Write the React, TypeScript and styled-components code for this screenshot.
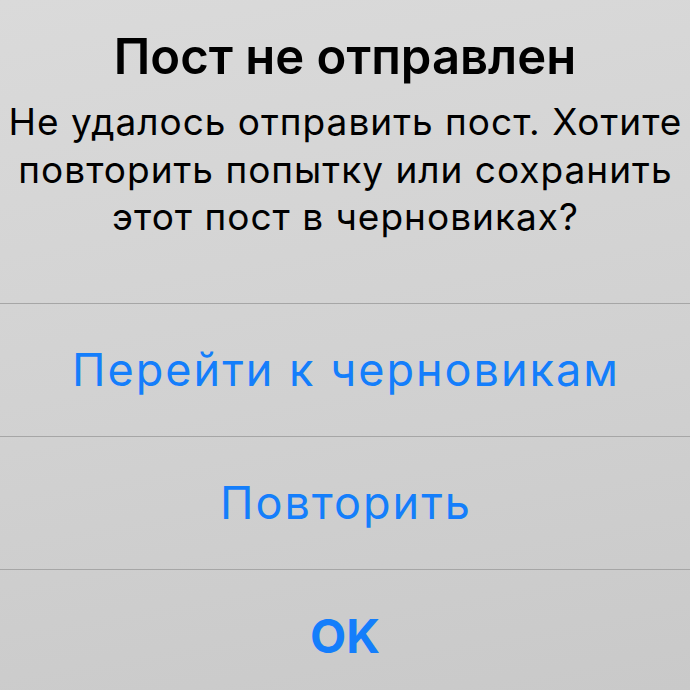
import React from "react";
import styled, { createGlobalStyle } from "styled-components";

const GlobalStyle = createGlobalStyle`
  html, body {
    margin: 0;
    padding: 0;
  }
  body {
    font-family: Inter, Roboto, "Liberation Sans", sans-serif;
  }
`;

const Sheet = styled.div`
  width: 690px;
  height: 690px;
  overflow: hidden;
  display: flex;
  flex-direction: column;
  background: linear-gradient(170deg, #dadada 0%, #d2d2d2 50%, #c9c9c9 100%);
`;

const Header = styled.div`
  padding: 29px 0 62px;
  display: flex;
  flex-direction: column;
  align-items: center;
  text-align: center;
`;

const Title = styled.h1`
  margin: 0 0 13px;
  font-size: 49px;
  line-height: 56px;
  font-weight: 600;
  color: #000;
  white-space: nowrap;
`;

const Message = styled.p`
  margin: 0;
  padding-left: 1px;
  font-size: 37px;
  line-height: 47.5px;
  letter-spacing: 1px;
  font-weight: 400;
  color: #000;
  white-space: nowrap;
`;

const Action = styled.button<{ $primary?: boolean }>`
  flex: 0 0 133px;
  display: flex;
  align-items: center;
  justify-content: center;
  border: 0;
  border-top: 1px solid #a6a6a6;
  background: transparent;
  padding: 0 0 0 ${(p) => (p.$primary ? "0" : "2px")};
  font-family: inherit;
  font-size: ${(p) => (p.$primary ? "47px" : "45px")};
  letter-spacing: ${(p) => (p.$primary ? "0" : "2px")};
  font-weight: ${(p) => (p.$primary ? 700 : 400)};
  color: #147efb;
  cursor: pointer;
`;

export default function App() {
  return (
    <>
      <GlobalStyle />
      <Sheet>
        <Header>
          <Title>Пост не отправлен</Title>
          <Message>
            Не удалось отправить пост. Хотите
            <br />
            повторить попытку или сохранить
            <br />
            этот пост в черновиках?
          </Message>
        </Header>
        <Action>Перейти к черновикам</Action>
        <Action>Повторить</Action>
        <Action $primary>OK</Action>
      </Sheet>
    </>
  );
}
